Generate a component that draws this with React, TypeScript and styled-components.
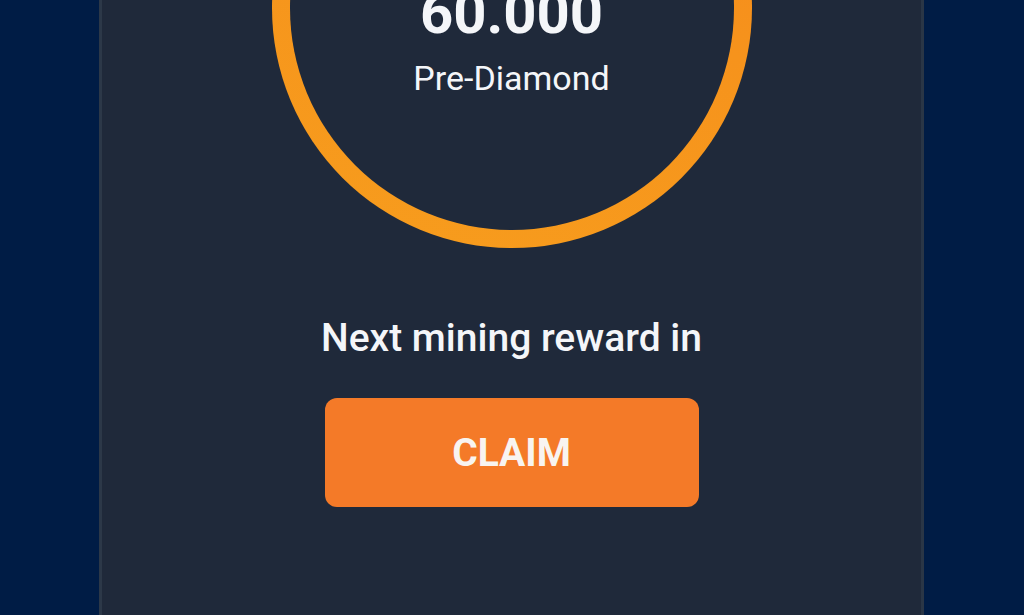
import React from 'react';
import styled, { createGlobalStyle } from 'styled-components';

const GlobalStyle = createGlobalStyle`
  html, body {
    margin: 0;
    padding: 0;
    height: 100%;
    background: #001c45;
    overflow: hidden;
  }
  #root {
    height: 100%;
  }
`;

const Page = styled.div`
  display: flex;
  justify-content: center;
  height: 100vh;
  background: #001c45;
  font-family: Roboto, 'Liberation Sans', sans-serif;
  color: #f4f6f9;
`;

const Panel = styled.main`
  width: 825px;
  margin-left: -1px;
  display: flex;
  flex-direction: column;
  align-items: center;
  background: #1f293a;
  box-shadow: inset 3px 0 0 rgba(70, 85, 100, 0.35), inset -3px 0 0 rgba(70, 85, 100, 0.3);
  overflow: hidden;
`;

const Ring = styled.div`
  box-sizing: border-box;
  flex: none;
  width: 480px;
  height: 480px;
  margin-top: -232px;
  padding-top: 198px;
  border-radius: 50%;
  border: 18px solid transparent;
  background:
    linear-gradient(#1f293a, #1f293a) padding-box,
    linear-gradient(200deg, #f7871b 0%, #f6931c 45%, #f79d1d 100%) border-box;
  display: flex;
  flex-direction: column;
  align-items: center;
`;

const Balance = styled.div`
  font-size: 58px;
  line-height: 58px;
  font-weight: 700;
`;

const Rank = styled.div`
  margin-top: 19px;
  font-size: 34px;
  line-height: 34px;
  font-weight: 400;
`;

const Caption = styled.div`
  margin-top: 71px;
  font-size: 39px;
  line-height: 39px;
  font-weight: 500;
`;

const ClaimButton = styled.button`
  margin-top: 40px;
  width: 374px;
  height: 109px;
  border: none;
  border-radius: 12px;
  background: #f47a28;
  color: #f8f4f0;
  font-family: Roboto, 'Liberation Sans', sans-serif;
  font-size: 39px;
  font-weight: 700;
  cursor: pointer;
`;

const App: React.FC = () => {
  return (
    <>
      <GlobalStyle />
      <Page>
        <Panel>
          <Ring>
            <Balance>60.000</Balance>
            <Rank>Pre-Diamond</Rank>
          </Ring>
          <Caption>Next mining reward in</Caption>
          <ClaimButton>CLAIM</ClaimButton>
        </Panel>
      </Page>
    </>
  );
};

export default App;
